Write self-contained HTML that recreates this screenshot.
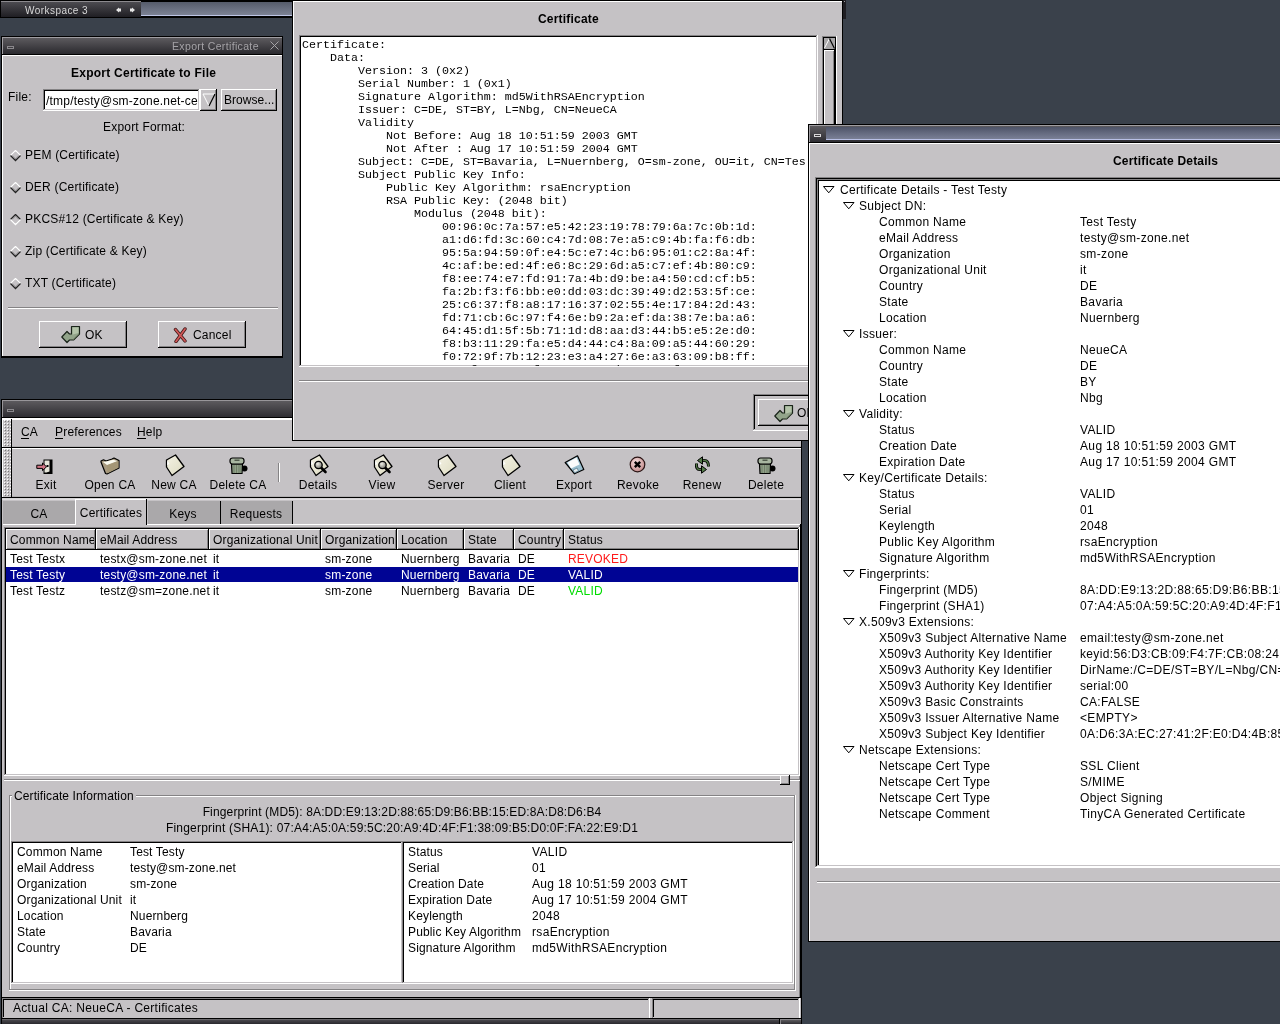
<!DOCTYPE html><html><head><meta charset="utf-8"><style>
html,body{margin:0;padding:0}
body{width:1280px;height:1024px;overflow:hidden;position:relative;background:#3a414b;font-family:'Liberation Sans',sans-serif}
div{position:absolute}
.t{white-space:pre;font-family:'Liberation Sans',sans-serif;font-size:12px;line-height:14px}
</style></head><body><div style="left:0;top:0;width:1280px;height:1024px;overflow:hidden;will-change:transform">
<div style="left:0px;top:0px;width:292px;height:18px;background:#000;"></div>
<div style="left:1px;top:1px;width:140px;height:16px;background:linear-gradient(#4c4b50,#1f1e23);border-top:1px solid #8c8a8e;box-sizing:border-box"></div>
<div style="left:141px;top:2px;width:151px;height:14px;background:linear-gradient(#555b6a,#7c8294);border-bottom:1px solid #bcc4e4;box-sizing:border-box"></div>
<div class="t" style="left:25px;top:5px;font-size:10px;color:#d8d8d8;letter-spacing:0.45px;line-height:12px;font-family:'Liberation Sans';">Workspace 3</div>
<svg style="position:absolute;left:115px;top:7px" width="22" height="6"><path d="M1 3 L4 0.5 V5.5Z M4 1.5h2v3h-2z" fill="#e6e6e6"/><path d="M15 1.5h2v3h-2z M17 0.5 L20 3 L17 5.5Z" fill="#e6e6e6"/></svg>
<div style="left:1px;top:399px;width:801px;height:625px;background:#000;"></div>
<div style="left:2px;top:400px;width:799px;height:17px;background:linear-gradient(#5c5a5e,#2e2d32);border-top:1px solid #98969a;border-left:1px solid #98969a;box-sizing:border-box"></div>
<div style="left:7px;top:409px;width:7px;height:3px;background:transparent;border:1px solid #8a888c;box-sizing:border-box"></div>
<div style="left:2px;top:418px;width:799px;height:601px;background:#fff;"></div>
<div style="left:2px;top:419px;width:799px;height:600px;background:#c5c2c5;"></div>
<div style="left:2px;top:419px;width:10px;height:29px;background:#fff;"></div>
<div style="left:3px;top:420px;width:8px;height:28px;background:#c5c2c5;"></div>
<svg style="position:absolute;left:3px;top:420px" width="8" height="27"><defs><pattern id="hp419" width="3" height="3" patternUnits="userSpaceOnUse"><rect x="1" y="0" width="1" height="1" fill="#fff"/><rect x="2" y="1" width="1" height="1" fill="#777"/></pattern></defs><rect width="8" height="27" fill="url(#hp419)"/></svg>
<div style="left:11px;top:419px;width:1px;height:29px;background:#000;"></div>
<div style="left:2px;top:447px;width:10px;height:1px;background:#000;"></div>
<div style="left:12px;top:419px;width:789px;height:28px;background:#c5c2c5;"></div>
<div style="left:12px;top:419px;width:789px;height:1px;background:#fff;"></div>
<div style="left:12px;top:447px;width:789px;height:1px;background:#000;"></div>
<div style="left:12px;top:446px;width:789px;height:1px;background:#b0aeb0;"></div>
<div class="t" style="left:21px;top:425px;font-size:12px;color:#000;letter-spacing:0.2px;line-height:14px;font-family:'Liberation Sans';">CA</div>
<div style="left:21px;top:438px;width:8px;height:1px;background:#000;"></div>
<div class="t" style="left:55px;top:425px;font-size:12px;color:#000;letter-spacing:0.2px;line-height:14px;font-family:'Liberation Sans';">Preferences</div>
<div style="left:55px;top:438px;width:8px;height:1px;background:#000;"></div>
<div class="t" style="left:137px;top:425px;font-size:12px;color:#000;letter-spacing:0.2px;line-height:14px;font-family:'Liberation Sans';">Help</div>
<div style="left:137px;top:438px;width:9px;height:1px;background:#000;"></div>
<div style="left:2px;top:448px;width:10px;height:50px;background:#fff;"></div>
<div style="left:3px;top:449px;width:8px;height:49px;background:#c5c2c5;"></div>
<svg style="position:absolute;left:3px;top:449px" width="8" height="48"><defs><pattern id="hp448" width="3" height="3" patternUnits="userSpaceOnUse"><rect x="1" y="0" width="1" height="1" fill="#fff"/><rect x="2" y="1" width="1" height="1" fill="#777"/></pattern></defs><rect width="8" height="48" fill="url(#hp448)"/></svg>
<div style="left:11px;top:448px;width:1px;height:50px;background:#000;"></div>
<div style="left:2px;top:497px;width:10px;height:1px;background:#000;"></div>
<div style="left:12px;top:448px;width:789px;height:49px;background:#c5c2c5;"></div>
<div style="left:12px;top:448px;width:789px;height:1px;background:#fff;"></div>
<div style="left:12px;top:497px;width:789px;height:1px;background:#000;"></div>
<div style="left:12px;top:496px;width:789px;height:1px;background:#b0aeb0;"></div>
<div style="left:2px;top:498px;width:799px;height:1px;background:#d4d2d4;"></div>
<div style="left:2px;top:499px;width:799px;height:1px;background:#dedcde;"></div>
<div class="t" style="left:-254px;width:600px;text-align:center;top:478px;font-size:12px;color:#000;letter-spacing:0.25px;line-height:14px;">Exit</div>
<div class="t" style="left:-190px;width:600px;text-align:center;top:478px;font-size:12px;color:#000;letter-spacing:0.25px;line-height:14px;">Open CA</div>
<div class="t" style="left:-126px;width:600px;text-align:center;top:478px;font-size:12px;color:#000;letter-spacing:0.25px;line-height:14px;">New CA</div>
<div class="t" style="left:-62px;width:600px;text-align:center;top:478px;font-size:12px;color:#000;letter-spacing:0.25px;line-height:14px;">Delete CA</div>
<div class="t" style="left:18px;width:600px;text-align:center;top:478px;font-size:12px;color:#000;letter-spacing:0.25px;line-height:14px;">Details</div>
<div class="t" style="left:82px;width:600px;text-align:center;top:478px;font-size:12px;color:#000;letter-spacing:0.25px;line-height:14px;">View</div>
<div class="t" style="left:146px;width:600px;text-align:center;top:478px;font-size:12px;color:#000;letter-spacing:0.25px;line-height:14px;">Server</div>
<div class="t" style="left:210px;width:600px;text-align:center;top:478px;font-size:12px;color:#000;letter-spacing:0.25px;line-height:14px;">Client</div>
<div class="t" style="left:274px;width:600px;text-align:center;top:478px;font-size:12px;color:#000;letter-spacing:0.25px;line-height:14px;">Export</div>
<div class="t" style="left:338px;width:600px;text-align:center;top:478px;font-size:12px;color:#000;letter-spacing:0.25px;line-height:14px;">Revoke</div>
<div class="t" style="left:402px;width:600px;text-align:center;top:478px;font-size:12px;color:#000;letter-spacing:0.25px;line-height:14px;">Renew</div>
<div class="t" style="left:466px;width:600px;text-align:center;top:478px;font-size:12px;color:#000;letter-spacing:0.25px;line-height:14px;">Delete</div>
<div style="left:278px;top:463px;width:1px;height:19px;background:#858385;"></div>
<div style="left:279px;top:463px;width:1px;height:19px;background:#fff;"></div>
<svg style="position:absolute;left:0px;top:0px" width="0" height="0"><defs><linearGradient id="dg" x1="0" y1="0" x2="1" y2="1"><stop offset="0" stop-color="#f4f2e4"/><stop offset="1" stop-color="#dcdac0"/></linearGradient><radialGradient id="mg" cx="0.4" cy="0.35" r="0.7"><stop offset="0" stop-color="#f0f0e8"/><stop offset="1" stop-color="#707068"/></radialGradient><radialGradient id="rg" cx="0.4" cy="0.35" r="0.7"><stop offset="0" stop-color="#f4dede"/><stop offset="1" stop-color="#c08888"/></radialGradient></defs></svg>
<svg style="position:absolute;left:36px;top:459px" width="18" height="16"><rect x="7.5" y="0.5" width="9" height="14.5" fill="#000"/><path d="M8.5 1.5 H13.5 V12.5 L10.5 13.5 H8.5Z" fill="#e6e6da"/><rect x="10.5" y="6" width="2" height="2" fill="#000"/><path d="M0.8 6.2 H6.5 V4 L10.5 7.8 L6.5 11.6 V9.4 H0.8Z" fill="#d27484" stroke="#000" stroke-width="1"/></svg>
<svg style="position:absolute;left:100px;top:457px" width="20" height="18"><path d="M1 4 L3.5 2.8 L6 4 L12 2 L14 1 L19 3.5 L19 11 L7 17 L5.5 16.5 L1 5Z" fill="#a89a80" stroke="#000" stroke-width="1.2" stroke-linejoin="round"/><path d="M3 5 L6 4.5 L13 2.8 L17.5 4 L7 8Z" fill="#fafaf0"/><path d="M7 8.5 L18.5 4 V10.8 L7.5 16.2Z" fill="#a49676"/></svg>
<svg style="position:absolute;left:165px;top:454px" width="21" height="23"><path d="M1.5 6 L10.5 1 L19 12.5 L7 21.5 L1.5 13 Z" fill="url(#dg)" stroke="#000" stroke-width="1.3" stroke-linejoin="round"/><path d="M2.2 6.8 L4.5 9.5 L2.2 11.5Z" fill="#fff"/></svg>
<svg style="position:absolute;left:229px;top:457px" width="20" height="18"><circle cx="15.5" cy="11.5" r="3" fill="#000"/><path d="M2.5 7 H13.5 L13 16.5 H3Z" fill="#90a088" stroke="#000" stroke-width="1.2"/><path d="M5 8 V16 M7.5 8 V16 M10 8 V16 M12 8 V16" stroke="#6c7c64" stroke-width="0.9"/><rect x="1" y="1" width="14" height="6" rx="2.5" fill="#a8b6a0" stroke="#000" stroke-width="1.2"/><rect x="5.5" y="2.5" width="5" height="1.5" fill="#505a4c"/></svg>
<svg style="position:absolute;left:309px;top:454px" width="21" height="23"><path d="M1.5 6 L10.5 1 L19 12.5 L7 21.5 L1.5 13 Z" fill="url(#dg)" stroke="#000" stroke-width="1.3" stroke-linejoin="round"/><path d="M2.2 6.8 L4.5 9.5 L2.2 11.5Z" fill="#fff"/><path d="M12 13.5 L16.5 18" stroke="#000" stroke-width="2.6" stroke-linecap="round"/><circle cx="9.5" cy="11" r="3.7" fill="url(#mg)" stroke="#000" stroke-width="1.3"/></svg>
<svg style="position:absolute;left:373px;top:454px" width="21" height="23"><path d="M1.5 6 L10.5 1 L19 12.5 L7 21.5 L1.5 13 Z" fill="url(#dg)" stroke="#000" stroke-width="1.3" stroke-linejoin="round"/><path d="M2.2 6.8 L4.5 9.5 L2.2 11.5Z" fill="#fff"/><path d="M12 13.5 L16.5 18" stroke="#000" stroke-width="2.6" stroke-linecap="round"/><circle cx="9.5" cy="11" r="3.7" fill="url(#mg)" stroke="#000" stroke-width="1.3"/></svg>
<svg style="position:absolute;left:437px;top:454px" width="21" height="23"><path d="M1.5 6 L10.5 1 L19 12.5 L7 21.5 L1.5 13 Z" fill="url(#dg)" stroke="#000" stroke-width="1.3" stroke-linejoin="round"/><path d="M2.2 6.8 L4.5 9.5 L2.2 11.5Z" fill="#fff"/></svg>
<svg style="position:absolute;left:501px;top:454px" width="21" height="23"><path d="M1.5 6 L10.5 1 L19 12.5 L7 21.5 L1.5 13 Z" fill="url(#dg)" stroke="#000" stroke-width="1.3" stroke-linejoin="round"/><path d="M2.2 6.8 L4.5 9.5 L2.2 11.5Z" fill="#fff"/></svg>
<svg style="position:absolute;left:564px;top:455px" width="21" height="20"><path d="M1.2 7.5 L13.5 0.8 L19.8 14.5 L10.5 18.8 Z" fill="#9cc0d0" stroke="#000" stroke-width="1.2" stroke-linejoin="round"/><path d="M3.5 7.5 L12.5 2.5 L15.5 9.5 L7 13.5Z" fill="#fbfbfb"/><path d="M9 15 L13 13 L14.5 16 L10.5 17.8Z" fill="#e8eef0" stroke="#5a7a8a" stroke-width="0.8"/></svg>
<svg style="position:absolute;left:629px;top:456px" width="17" height="17"><circle cx="8.5" cy="8.5" r="7.3" fill="url(#rg)" stroke="#2a1414" stroke-width="1.2"/><path d="M5.8 5.8 L11.2 11.2 M11.2 5.8 L5.8 11.2" stroke="#000" stroke-width="2.4"/></svg>
<svg style="position:absolute;left:694px;top:456px" width="17" height="19"><path d="M8 4.5 H10.5 Q14.5 4.5 14.5 10.5" fill="none" stroke="#000" stroke-width="3"/><path d="M8 13.5 H5.5 Q2 13.5 2.5 7.5" fill="none" stroke="#000" stroke-width="3"/><path d="M8 4.5 H10.5 Q14.5 4.5 14.5 10.5" fill="none" stroke="#527a46" stroke-width="1.3"/><path d="M8 13.5 H5.5 Q2 13.5 2.5 7.5" fill="none" stroke="#527a46" stroke-width="1.3"/><path d="M3.5 4.5 L8.5 0.8 L8.5 8.2Z" fill="#527a46" stroke="#000" stroke-width="1"/><path d="M12.5 13.5 L7.5 9.8 L7.5 17.2Z" fill="#527a46" stroke="#000" stroke-width="1"/></svg>
<svg style="position:absolute;left:757px;top:457px" width="20" height="18"><circle cx="15.5" cy="11.5" r="3" fill="#000"/><path d="M2.5 7 H13.5 L13 16.5 H3Z" fill="#90a088" stroke="#000" stroke-width="1.2"/><path d="M5 8 V16 M7.5 8 V16 M10 8 V16 M12 8 V16" stroke="#6c7c64" stroke-width="0.9"/><rect x="1" y="1" width="14" height="6" rx="2.5" fill="#a8b6a0" stroke="#000" stroke-width="1.2"/><rect x="5.5" y="2.5" width="5" height="1.5" fill="#505a4c"/></svg>
<div style="left:2px;top:500px;width:799px;height:498px;background:#c5c2c5;"></div>
<div style="left:3px;top:501px;width:72px;height:23px;background:#aaa8aa;"></div>
<div class="t" style="left:-261px;width:600px;text-align:center;top:507px;font-size:12px;color:#000;letter-spacing:0.2px;line-height:14px;">CA</div>
<div style="left:148px;top:501px;width:73px;height:23px;background:#aaa8aa;"></div>
<div style="left:220px;top:501px;width:1px;height:23px;background:#000;"></div>
<div class="t" style="left:-117px;width:600px;text-align:center;top:507px;font-size:12px;color:#000;letter-spacing:0.2px;line-height:14px;">Keys</div>
<div style="left:221px;top:501px;width:72px;height:23px;background:#aaa8aa;"></div>
<div style="left:292px;top:501px;width:1px;height:23px;background:#000;"></div>
<div class="t" style="left:-44px;width:600px;text-align:center;top:507px;font-size:12px;color:#000;letter-spacing:0.2px;line-height:14px;">Requests</div>
<div style="left:3px;top:524px;width:797px;height:1px;background:#fff;"></div>
<div style="left:75px;top:499px;width:72px;height:27px;background:#c5c2c5;"></div>
<div style="left:75px;top:499px;width:1px;height:26px;background:#fff;"></div>
<div style="left:76px;top:499px;width:70px;height:1px;background:#fff;"></div>
<div style="left:146px;top:499px;width:1px;height:26px;background:#000;"></div>
<div class="t" style="left:-189px;width:600px;text-align:center;top:506px;font-size:12px;color:#000;letter-spacing:0.2px;line-height:14px;">Certificates</div>
<div style="left:800px;top:524px;width:1px;height:474px;background:#000;"></div>
<div style="left:799px;top:525px;width:1px;height:472px;background:#858385;"></div>
<div style="left:4px;top:527px;width:796px;height:249px;background:#fff;"></div>
<div style="left:4px;top:527px;width:795px;height:248px;background:#858385;"></div>
<div style="left:5px;top:528px;width:794px;height:247px;background:#c5c2c5;"></div>
<div style="left:5px;top:528px;width:793px;height:246px;background:#000;"></div>
<div style="left:6px;top:529px;width:792px;height:245px;background:#fff;"></div>
<div style="left:6px;top:529px;width:90px;height:21px;background:#000;"></div>
<div style="left:6px;top:529px;width:89px;height:20px;background:#fff;"></div>
<div style="left:7px;top:530px;width:88px;height:19px;background:#858385;"></div>
<div style="left:7px;top:530px;width:87px;height:18px;background:#c5c2c5;"></div>
<div class="t" style="left:10px;top:533px;font-size:12px;color:#000;letter-spacing:0.15px;line-height:14px;font-family:'Liberation Sans';width:84px;overflow:hidden">Common Name</div>
<div style="left:96px;top:529px;width:113px;height:21px;background:#000;"></div>
<div style="left:96px;top:529px;width:112px;height:20px;background:#fff;"></div>
<div style="left:97px;top:530px;width:111px;height:19px;background:#858385;"></div>
<div style="left:97px;top:530px;width:110px;height:18px;background:#c5c2c5;"></div>
<div class="t" style="left:100px;top:533px;font-size:12px;color:#000;letter-spacing:0.15px;line-height:14px;font-family:'Liberation Sans';width:107px;overflow:hidden">eMail Address</div>
<div style="left:209px;top:529px;width:112px;height:21px;background:#000;"></div>
<div style="left:209px;top:529px;width:111px;height:20px;background:#fff;"></div>
<div style="left:210px;top:530px;width:110px;height:19px;background:#858385;"></div>
<div style="left:210px;top:530px;width:109px;height:18px;background:#c5c2c5;"></div>
<div class="t" style="left:213px;top:533px;font-size:12px;color:#000;letter-spacing:0.15px;line-height:14px;font-family:'Liberation Sans';width:106px;overflow:hidden">Organizational Unit</div>
<div style="left:321px;top:529px;width:76px;height:21px;background:#000;"></div>
<div style="left:321px;top:529px;width:75px;height:20px;background:#fff;"></div>
<div style="left:322px;top:530px;width:74px;height:19px;background:#858385;"></div>
<div style="left:322px;top:530px;width:73px;height:18px;background:#c5c2c5;"></div>
<div class="t" style="left:325px;top:533px;font-size:12px;color:#000;letter-spacing:0.15px;line-height:14px;font-family:'Liberation Sans';width:70px;overflow:hidden">Organization</div>
<div style="left:397px;top:529px;width:67px;height:21px;background:#000;"></div>
<div style="left:397px;top:529px;width:66px;height:20px;background:#fff;"></div>
<div style="left:398px;top:530px;width:65px;height:19px;background:#858385;"></div>
<div style="left:398px;top:530px;width:64px;height:18px;background:#c5c2c5;"></div>
<div class="t" style="left:401px;top:533px;font-size:12px;color:#000;letter-spacing:0.15px;line-height:14px;font-family:'Liberation Sans';width:61px;overflow:hidden">Location</div>
<div style="left:464px;top:529px;width:50px;height:21px;background:#000;"></div>
<div style="left:464px;top:529px;width:49px;height:20px;background:#fff;"></div>
<div style="left:465px;top:530px;width:48px;height:19px;background:#858385;"></div>
<div style="left:465px;top:530px;width:47px;height:18px;background:#c5c2c5;"></div>
<div class="t" style="left:468px;top:533px;font-size:12px;color:#000;letter-spacing:0.15px;line-height:14px;font-family:'Liberation Sans';width:44px;overflow:hidden">State</div>
<div style="left:514px;top:529px;width:50px;height:21px;background:#000;"></div>
<div style="left:514px;top:529px;width:49px;height:20px;background:#fff;"></div>
<div style="left:515px;top:530px;width:48px;height:19px;background:#858385;"></div>
<div style="left:515px;top:530px;width:47px;height:18px;background:#c5c2c5;"></div>
<div class="t" style="left:518px;top:533px;font-size:12px;color:#000;letter-spacing:0.15px;line-height:14px;font-family:'Liberation Sans';width:44px;overflow:hidden">Country</div>
<div style="left:564px;top:529px;width:235px;height:21px;background:#000;"></div>
<div style="left:564px;top:529px;width:234px;height:20px;background:#fff;"></div>
<div style="left:565px;top:530px;width:233px;height:19px;background:#858385;"></div>
<div style="left:565px;top:530px;width:232px;height:18px;background:#c5c2c5;"></div>
<div class="t" style="left:568px;top:533px;font-size:12px;color:#000;letter-spacing:0.15px;line-height:14px;font-family:'Liberation Sans';width:229px;overflow:hidden">Status</div>
<div style="left:6px;top:567px;width:792px;height:15px;background:#000494;"></div>
<div class="t" style="left:10px;top:552px;font-size:12px;color:#000;letter-spacing:0.2px;line-height:14px;font-family:'Liberation Sans';">Test Testx</div>
<div class="t" style="left:100px;top:552px;font-size:12px;color:#000;letter-spacing:0.2px;line-height:14px;font-family:'Liberation Sans';">testx@sm-zone.net</div>
<div class="t" style="left:213px;top:552px;font-size:12px;color:#000;letter-spacing:0.2px;line-height:14px;font-family:'Liberation Sans';">it</div>
<div class="t" style="left:325px;top:552px;font-size:12px;color:#000;letter-spacing:0.2px;line-height:14px;font-family:'Liberation Sans';">sm-zone</div>
<div class="t" style="left:401px;top:552px;font-size:12px;color:#000;letter-spacing:0.2px;line-height:14px;font-family:'Liberation Sans';">Nuernberg</div>
<div class="t" style="left:468px;top:552px;font-size:12px;color:#000;letter-spacing:0.2px;line-height:14px;font-family:'Liberation Sans';">Bavaria</div>
<div class="t" style="left:518px;top:552px;font-size:12px;color:#000;letter-spacing:0.2px;line-height:14px;font-family:'Liberation Sans';">DE</div>
<div class="t" style="left:568px;top:552px;font-size:12px;color:#ff1a1a;letter-spacing:0.2px;line-height:14px;font-family:'Liberation Sans';">REVOKED</div>
<div class="t" style="left:10px;top:568px;font-size:12px;color:#fff;letter-spacing:0.2px;line-height:14px;font-family:'Liberation Sans';">Test Testy</div>
<div class="t" style="left:100px;top:568px;font-size:12px;color:#fff;letter-spacing:0.2px;line-height:14px;font-family:'Liberation Sans';">testy@sm-zone.net</div>
<div class="t" style="left:213px;top:568px;font-size:12px;color:#fff;letter-spacing:0.2px;line-height:14px;font-family:'Liberation Sans';">it</div>
<div class="t" style="left:325px;top:568px;font-size:12px;color:#fff;letter-spacing:0.2px;line-height:14px;font-family:'Liberation Sans';">sm-zone</div>
<div class="t" style="left:401px;top:568px;font-size:12px;color:#fff;letter-spacing:0.2px;line-height:14px;font-family:'Liberation Sans';">Nuernberg</div>
<div class="t" style="left:468px;top:568px;font-size:12px;color:#fff;letter-spacing:0.2px;line-height:14px;font-family:'Liberation Sans';">Bavaria</div>
<div class="t" style="left:518px;top:568px;font-size:12px;color:#fff;letter-spacing:0.2px;line-height:14px;font-family:'Liberation Sans';">DE</div>
<div class="t" style="left:568px;top:568px;font-size:12px;color:#fff;letter-spacing:0.2px;line-height:14px;font-family:'Liberation Sans';">VALID</div>
<div class="t" style="left:10px;top:584px;font-size:12px;color:#000;letter-spacing:0.2px;line-height:14px;font-family:'Liberation Sans';">Test Testz</div>
<div class="t" style="left:100px;top:584px;font-size:12px;color:#000;letter-spacing:0.2px;line-height:14px;font-family:'Liberation Sans';">testz@sm=zone.net</div>
<div class="t" style="left:213px;top:584px;font-size:12px;color:#000;letter-spacing:0.2px;line-height:14px;font-family:'Liberation Sans';">it</div>
<div class="t" style="left:325px;top:584px;font-size:12px;color:#000;letter-spacing:0.2px;line-height:14px;font-family:'Liberation Sans';">sm-zone</div>
<div class="t" style="left:401px;top:584px;font-size:12px;color:#000;letter-spacing:0.2px;line-height:14px;font-family:'Liberation Sans';">Nuernberg</div>
<div class="t" style="left:468px;top:584px;font-size:12px;color:#000;letter-spacing:0.2px;line-height:14px;font-family:'Liberation Sans';">Bavaria</div>
<div class="t" style="left:518px;top:584px;font-size:12px;color:#000;letter-spacing:0.2px;line-height:14px;font-family:'Liberation Sans';">DE</div>
<div class="t" style="left:568px;top:584px;font-size:12px;color:#00dd00;letter-spacing:0.2px;line-height:14px;font-family:'Liberation Sans';">VALID</div>
<div style="left:4px;top:779px;width:796px;height:1px;background:#858385;"></div>
<div style="left:4px;top:780px;width:796px;height:1px;background:#fff;"></div>
<div style="left:780px;top:775px;width:10px;height:10px;background:#000;"></div>
<div style="left:780px;top:775px;width:9px;height:9px;background:#fff;"></div>
<div style="left:781px;top:776px;width:8px;height:8px;background:#858385;"></div>
<div style="left:781px;top:776px;width:7px;height:7px;background:#c5c2c5;"></div>
<div style="left:9px;top:795px;width:787px;height:1px;background:#858385;"></div>
<div style="left:10px;top:796px;width:785px;height:1px;background:#fff;"></div>
<div style="left:9px;top:795px;width:1px;height:196px;background:#858385;"></div>
<div style="left:10px;top:796px;width:1px;height:194px;background:#fff;"></div>
<div style="left:794px;top:795px;width:1px;height:195px;background:#858385;"></div>
<div style="left:795px;top:795px;width:1px;height:196px;background:#fff;"></div>
<div style="left:9px;top:989px;width:786px;height:1px;background:#858385;"></div>
<div style="left:9px;top:990px;width:787px;height:1px;background:#fff;"></div>
<div style="left:12px;top:790px;width:124px;height:12px;background:#c5c2c5;"></div>
<div class="t" style="left:14px;top:789px;font-size:12px;color:#000;letter-spacing:0.1px;line-height:14px;font-family:'Liberation Sans';">Certificate Information</div>
<div class="t" style="left:102px;width:600px;text-align:center;top:805px;font-size:12px;color:#000;letter-spacing:0.15px;line-height:14px;">Fingerprint (MD5): 8A:DD:E9:13:2D:88:65:D9:B6:BB:15:ED:8A:D8:D6:B4</div>
<div class="t" style="left:102px;width:600px;text-align:center;top:821px;font-size:12px;color:#000;letter-spacing:0.2px;line-height:14px;">Fingerprint (SHA1): 07:A4:A5:0A:59:5C:20:A9:4D:4F:F1:38:09:B5:D0:0F:FA:22:E9:D1</div>
<div style="left:11px;top:841px;width:392px;height:143px;background:#fff;"></div>
<div style="left:11px;top:841px;width:391px;height:142px;background:#858385;"></div>
<div style="left:12px;top:842px;width:390px;height:141px;background:#c5c2c5;"></div>
<div style="left:12px;top:842px;width:389px;height:140px;background:#000;"></div>
<div style="left:13px;top:843px;width:388px;height:139px;background:#fff;"></div>
<div style="left:402px;top:841px;width:392px;height:143px;background:#fff;"></div>
<div style="left:402px;top:841px;width:391px;height:142px;background:#858385;"></div>
<div style="left:403px;top:842px;width:390px;height:141px;background:#c5c2c5;"></div>
<div style="left:403px;top:842px;width:389px;height:140px;background:#000;"></div>
<div style="left:404px;top:843px;width:388px;height:139px;background:#fff;"></div>
<div class="t" style="left:17px;top:845px;font-size:12px;color:#000;letter-spacing:0.15px;line-height:14px;font-family:'Liberation Sans';">Common Name</div>
<div class="t" style="left:130px;top:845px;font-size:12px;color:#000;letter-spacing:0.15px;line-height:14px;font-family:'Liberation Sans';">Test Testy</div>
<div class="t" style="left:17px;top:861px;font-size:12px;color:#000;letter-spacing:0.15px;line-height:14px;font-family:'Liberation Sans';">eMail Address</div>
<div class="t" style="left:130px;top:861px;font-size:12px;color:#000;letter-spacing:0.15px;line-height:14px;font-family:'Liberation Sans';">testy@sm-zone.net</div>
<div class="t" style="left:17px;top:877px;font-size:12px;color:#000;letter-spacing:0.15px;line-height:14px;font-family:'Liberation Sans';">Organization</div>
<div class="t" style="left:130px;top:877px;font-size:12px;color:#000;letter-spacing:0.15px;line-height:14px;font-family:'Liberation Sans';">sm-zone</div>
<div class="t" style="left:17px;top:893px;font-size:12px;color:#000;letter-spacing:0.15px;line-height:14px;font-family:'Liberation Sans';">Organizational Unit</div>
<div class="t" style="left:130px;top:893px;font-size:12px;color:#000;letter-spacing:0.15px;line-height:14px;font-family:'Liberation Sans';">it</div>
<div class="t" style="left:17px;top:909px;font-size:12px;color:#000;letter-spacing:0.15px;line-height:14px;font-family:'Liberation Sans';">Location</div>
<div class="t" style="left:130px;top:909px;font-size:12px;color:#000;letter-spacing:0.15px;line-height:14px;font-family:'Liberation Sans';">Nuernberg</div>
<div class="t" style="left:17px;top:925px;font-size:12px;color:#000;letter-spacing:0.15px;line-height:14px;font-family:'Liberation Sans';">State</div>
<div class="t" style="left:130px;top:925px;font-size:12px;color:#000;letter-spacing:0.15px;line-height:14px;font-family:'Liberation Sans';">Bavaria</div>
<div class="t" style="left:17px;top:941px;font-size:12px;color:#000;letter-spacing:0.15px;line-height:14px;font-family:'Liberation Sans';">Country</div>
<div class="t" style="left:130px;top:941px;font-size:12px;color:#000;letter-spacing:0.15px;line-height:14px;font-family:'Liberation Sans';">DE</div>
<div class="t" style="left:408px;top:845px;font-size:12px;color:#000;letter-spacing:0.15px;line-height:14px;font-family:'Liberation Sans';">Status</div>
<div class="t" style="left:532px;top:845px;font-size:12px;color:#000;letter-spacing:0.33px;line-height:14px;font-family:'Liberation Sans';">VALID</div>
<div class="t" style="left:408px;top:861px;font-size:12px;color:#000;letter-spacing:0.15px;line-height:14px;font-family:'Liberation Sans';">Serial</div>
<div class="t" style="left:532px;top:861px;font-size:12px;color:#000;letter-spacing:0.33px;line-height:14px;font-family:'Liberation Sans';">01</div>
<div class="t" style="left:408px;top:877px;font-size:12px;color:#000;letter-spacing:0.15px;line-height:14px;font-family:'Liberation Sans';">Creation Date</div>
<div class="t" style="left:532px;top:877px;font-size:12px;color:#000;letter-spacing:0.33px;line-height:14px;font-family:'Liberation Sans';">Aug 18 10:51:59 2003 GMT</div>
<div class="t" style="left:408px;top:893px;font-size:12px;color:#000;letter-spacing:0.15px;line-height:14px;font-family:'Liberation Sans';">Expiration Date</div>
<div class="t" style="left:532px;top:893px;font-size:12px;color:#000;letter-spacing:0.33px;line-height:14px;font-family:'Liberation Sans';">Aug 17 10:51:59 2004 GMT</div>
<div class="t" style="left:408px;top:909px;font-size:12px;color:#000;letter-spacing:0.15px;line-height:14px;font-family:'Liberation Sans';">Keylength</div>
<div class="t" style="left:532px;top:909px;font-size:12px;color:#000;letter-spacing:0.33px;line-height:14px;font-family:'Liberation Sans';">2048</div>
<div class="t" style="left:408px;top:925px;font-size:12px;color:#000;letter-spacing:0.15px;line-height:14px;font-family:'Liberation Sans';">Public Key Algorithm</div>
<div class="t" style="left:532px;top:925px;font-size:12px;color:#000;letter-spacing:0.33px;line-height:14px;font-family:'Liberation Sans';">rsaEncryption</div>
<div class="t" style="left:408px;top:941px;font-size:12px;color:#000;letter-spacing:0.15px;line-height:14px;font-family:'Liberation Sans';">Signature Algorithm</div>
<div class="t" style="left:532px;top:941px;font-size:12px;color:#000;letter-spacing:0.33px;line-height:14px;font-family:'Liberation Sans';">md5WithRSAEncryption</div>
<div style="left:1px;top:997px;width:800px;height:1px;background:#000;"></div>
<div style="left:2px;top:998px;width:648px;height:21px;background:#fff;"></div>
<div style="left:2px;top:998px;width:647px;height:20px;background:#858385;"></div>
<div style="left:3px;top:999px;width:646px;height:19px;background:#c5c2c5;"></div>
<div style="left:3px;top:999px;width:645px;height:18px;background:#000;"></div>
<div style="left:4px;top:1000px;width:644px;height:17px;background:#c5c2c5;"></div>
<div style="left:652px;top:998px;width:148px;height:21px;background:#fff;"></div>
<div style="left:652px;top:998px;width:147px;height:20px;background:#858385;"></div>
<div style="left:653px;top:999px;width:146px;height:19px;background:#c5c2c5;"></div>
<div style="left:653px;top:999px;width:145px;height:18px;background:#000;"></div>
<div style="left:654px;top:1000px;width:144px;height:17px;background:#c5c2c5;"></div>
<div class="t" style="left:13px;top:1001px;font-size:12px;color:#000;letter-spacing:0.3px;line-height:14px;font-family:'Liberation Sans';">Actual CA: NeueCA - Certificates</div>
<div style="left:1px;top:1018px;width:801px;height:6px;background:#000;"></div>
<div style="left:2px;top:1019px;width:777px;height:5px;background:linear-gradient(#48474c,#2a292e);border-top:1px solid #6a686c;box-sizing:border-box"></div>
<div style="left:780px;top:1019px;width:21px;height:5px;background:linear-gradient(#5c5a5e,#2e2d32);border-top:1px solid #8a888c;border-left:1px solid #8a888c;box-sizing:border-box"></div>
<div style="left:1px;top:36px;width:282px;height:322px;background:#000;"></div>
<div style="left:2px;top:37px;width:280px;height:17px;background:linear-gradient(#5c5a5e,#2a292e);border-top:1px solid #a09ea2;border-left:1px solid #a09ea2;box-sizing:border-box"></div>
<div style="left:7px;top:46px;width:7px;height:3px;background:transparent;border:1px solid #8a888c;box-sizing:border-box"></div>
<div class="t" style="left:172px;top:40px;font-size:10.5px;color:#a4a2a6;letter-spacing:0.35px;line-height:12px;font-family:'Liberation Sans';">Export Certificate</div>
<svg style="position:absolute;left:270px;top:41px" width="9" height="9"><path d="M0.5 0.5L8.5 8.5M8.5 0.5L0.5 8.5" stroke="#a4a2a6" stroke-width="1"/></svg>
<div style="left:2px;top:55px;width:280px;height:301px;background:#fff;"></div>
<div style="left:3px;top:56px;width:279px;height:300px;background:#c5c2c5;"></div>
<div class="t" style="left:71px;top:66px;font-size:12px;font-weight:bold;color:#000;letter-spacing:0.25px;line-height:14px;font-family:'Liberation Sans';">Export Certificate to File</div>
<div class="t" style="left:8px;top:90px;font-size:12px;color:#000;letter-spacing:0.2px;line-height:14px;font-family:'Liberation Sans';">File:</div>
<div style="left:43px;top:89px;width:157px;height:22px;background:#fff;"></div>
<div style="left:43px;top:89px;width:156px;height:21px;background:#858385;"></div>
<div style="left:44px;top:90px;width:155px;height:20px;background:#c5c2c5;"></div>
<div style="left:44px;top:90px;width:154px;height:19px;background:#000;"></div>
<div style="left:45px;top:91px;width:153px;height:18px;background:#fff;"></div>
<div class="t" style="left:46px;top:94px;font-size:12px;color:#000;letter-spacing:0.2px;line-height:14px;font-family:'Liberation Sans';width:152px;overflow:hidden">/tmp/testy@sm-zone.net-ce</div>
<div style="left:200px;top:89px;width:17px;height:22px;background:#000;"></div>
<div style="left:200px;top:89px;width:16px;height:21px;background:#fff;"></div>
<div style="left:201px;top:90px;width:15px;height:20px;background:#858385;"></div>
<div style="left:201px;top:90px;width:14px;height:19px;background:#c5c2c5;"></div>
<svg style="position:absolute;left:202px;top:93px" width="14" height="14"><path d="M1 1 L13 1 L7 13 Z" fill="none" stroke="#fff" stroke-width="1"/><path d="M13 1 L7 13" stroke="#000" stroke-width="1.3"/></svg>
<div style="left:221px;top:89px;width:56px;height:22px;background:#000;"></div>
<div style="left:221px;top:89px;width:55px;height:21px;background:#fff;"></div>
<div style="left:222px;top:90px;width:54px;height:20px;background:#858385;"></div>
<div style="left:222px;top:90px;width:53px;height:19px;background:#c5c2c5;"></div>
<div class="t" style="left:224px;top:93px;font-size:12px;color:#000;letter-spacing:0.05px;line-height:14px;font-family:'Liberation Sans';">Browse...</div>
<div class="t" style="left:103px;top:120px;font-size:12px;color:#000;letter-spacing:0.2px;line-height:14px;font-family:'Liberation Sans';">Export Format:</div>
<svg style="position:absolute;left:10px;top:150px" width="12" height="12"><path d="M0.5 5.5 L5.5 0.5 L10.5 5.5" fill="none" stroke="#fff" stroke-width="1.3"/><path d="M0.5 5.5 L5.5 10.5 L10.5 5.5" fill="none" stroke="#222" stroke-width="1.3"/><path d="M2 5.5 L5.5 2 L9 5.5" fill="none" stroke="#c5c2c5" stroke-width="1"/><path d="M2 5.5 L5.5 9 L9 5.5" fill="none" stroke="#8a888a" stroke-width="1"/></svg>
<div class="t" style="left:25px;top:148px;font-size:12px;color:#000;letter-spacing:0.2px;line-height:14px;font-family:'Liberation Sans';">PEM (Certificate)</div>
<svg style="position:absolute;left:10px;top:182px" width="12" height="12"><path d="M0.5 5.5 L5.5 0.5 L10.5 5.5" fill="none" stroke="#fff" stroke-width="1.3"/><path d="M0.5 5.5 L5.5 10.5 L10.5 5.5" fill="none" stroke="#222" stroke-width="1.3"/><path d="M2 5.5 L5.5 2 L9 5.5" fill="none" stroke="#c5c2c5" stroke-width="1"/><path d="M2 5.5 L5.5 9 L9 5.5" fill="none" stroke="#8a888a" stroke-width="1"/></svg>
<div class="t" style="left:25px;top:180px;font-size:12px;color:#000;letter-spacing:0.2px;line-height:14px;font-family:'Liberation Sans';">DER (Certificate)</div>
<svg style="position:absolute;left:10px;top:214px" width="12" height="12"><path d="M0.5 5.5 L5.5 0.5 L10.5 5.5" fill="none" stroke="#222" stroke-width="1.3"/><path d="M0.5 5.5 L5.5 10.5 L10.5 5.5" fill="none" stroke="#fff" stroke-width="1.3"/><path d="M2 5.5 L5.5 2 L9 5.5" fill="none" stroke="#8a888a" stroke-width="1"/><path d="M2 5.5 L5.5 9 L9 5.5" fill="none" stroke="#c5c2c5" stroke-width="1"/></svg>
<div class="t" style="left:25px;top:212px;font-size:12px;color:#000;letter-spacing:0.2px;line-height:14px;font-family:'Liberation Sans';">PKCS#12 (Certificate &amp; Key)</div>
<svg style="position:absolute;left:10px;top:246px" width="12" height="12"><path d="M0.5 5.5 L5.5 0.5 L10.5 5.5" fill="none" stroke="#fff" stroke-width="1.3"/><path d="M0.5 5.5 L5.5 10.5 L10.5 5.5" fill="none" stroke="#222" stroke-width="1.3"/><path d="M2 5.5 L5.5 2 L9 5.5" fill="none" stroke="#c5c2c5" stroke-width="1"/><path d="M2 5.5 L5.5 9 L9 5.5" fill="none" stroke="#8a888a" stroke-width="1"/></svg>
<div class="t" style="left:25px;top:244px;font-size:12px;color:#000;letter-spacing:0.2px;line-height:14px;font-family:'Liberation Sans';">Zip (Certificate &amp; Key)</div>
<svg style="position:absolute;left:10px;top:278px" width="12" height="12"><path d="M0.5 5.5 L5.5 0.5 L10.5 5.5" fill="none" stroke="#fff" stroke-width="1.3"/><path d="M0.5 5.5 L5.5 10.5 L10.5 5.5" fill="none" stroke="#222" stroke-width="1.3"/><path d="M2 5.5 L5.5 2 L9 5.5" fill="none" stroke="#c5c2c5" stroke-width="1"/><path d="M2 5.5 L5.5 9 L9 5.5" fill="none" stroke="#8a888a" stroke-width="1"/></svg>
<div class="t" style="left:25px;top:276px;font-size:12px;color:#000;letter-spacing:0.2px;line-height:14px;font-family:'Liberation Sans';">TXT (Certificate)</div>
<div style="left:8px;top:307px;width:270px;height:1px;background:#858385;"></div>
<div style="left:8px;top:308px;width:270px;height:1px;background:#fff;"></div>
<div style="left:39px;top:321px;width:88px;height:27px;background:#000;"></div>
<div style="left:39px;top:321px;width:87px;height:26px;background:#fff;"></div>
<div style="left:40px;top:322px;width:86px;height:25px;background:#858385;"></div>
<div style="left:40px;top:322px;width:85px;height:24px;background:#c5c2c5;"></div>
<div class="t" style="left:85px;top:328px;font-size:12px;color:#000;letter-spacing:0.2px;line-height:14px;font-family:'Liberation Sans';">OK</div>
<div style="left:158px;top:321px;width:88px;height:27px;background:#000;"></div>
<div style="left:158px;top:321px;width:87px;height:26px;background:#fff;"></div>
<div style="left:159px;top:322px;width:86px;height:25px;background:#858385;"></div>
<div style="left:159px;top:322px;width:85px;height:24px;background:#c5c2c5;"></div>
<div class="t" style="left:193px;top:328px;font-size:12px;color:#000;letter-spacing:0.2px;line-height:14px;font-family:'Liberation Sans';">Cancel</div>
<svg style="position:absolute;left:61px;top:325px" width="20" height="19"><path d="M10.5 1.5 H18.5 V9 L12.5 15 H8.5 L6 17.5 L0.8 12 L6 6.5 L8.5 9 H10.5 Z" fill="#92a48a" stroke="#1a241a" stroke-width="1.2" stroke-linejoin="round"/><path d="M11.5 2.5 H17.5 V8 L12 9.5 H11.5Z" fill="#b4c4aa"/><path d="M12 15 L18 9" stroke="#5a6a52" stroke-width="1"/></svg>
<svg style="position:absolute;left:173px;top:327px" width="15" height="16"><path d="M2.5 2.5 L12 14 M12 2 L3 14.5" stroke="#401818" stroke-width="3.4" stroke-linecap="round"/><path d="M2.5 2.5 L12 14 M12 2 L3 14.5" stroke="#d05858" stroke-width="1.8" stroke-linecap="round"/></svg>
<div style="left:292px;top:0px;width:551px;height:441px;background:#000;"></div>
<div style="left:293px;top:1px;width:549px;height:439px;background:#fff;"></div>
<div style="left:294px;top:2px;width:548px;height:438px;background:#c5c2c5;"></div>
<div class="t" style="left:538px;top:12px;font-size:12px;font-weight:bold;color:#000;letter-spacing:0.2px;line-height:14px;font-family:'Liberation Sans';">Certificate</div>
<div style="left:843px;top:0px;width:3px;height:19px;background:#1e1d22;"></div>
<div style="left:844px;top:1px;width:1px;height:1px;background:#9a989c;"></div>
<div style="left:299px;top:35px;width:519px;height:332px;background:#fff;"></div>
<div style="left:299px;top:35px;width:518px;height:331px;background:#858385;"></div>
<div style="left:300px;top:36px;width:517px;height:330px;background:#c5c2c5;"></div>
<div style="left:300px;top:36px;width:516px;height:329px;background:#000;"></div>
<div style="left:301px;top:37px;width:515px;height:328px;background:#fff;"></div>
<div style="left:301px;top:37px;width:505px;height:329px;overflow:hidden">
<div class="t" style="left:1px;top:2px;font-family:'Liberation Mono',monospace;font-size:11.667px;line-height:13px">Certificate:
    Data:
        Version: 3 (0x2)
        Serial Number: 1 (0x1)
        Signature Algorithm: md5WithRSAEncryption
        Issuer: C=DE, ST=BY, L=Nbg, CN=NeueCA
        Validity
            Not Before: Aug 18 10:51:59 2003 GMT
            Not After : Aug 17 10:51:59 2004 GMT
        Subject: C=DE, ST=Bavaria, L=Nuernberg, O=sm-zone, OU=it, CN=Tes
        Subject Public Key Info:
            Public Key Algorithm: rsaEncryption
            RSA Public Key: (2048 bit)
                Modulus (2048 bit):
                    00:96:0c:7a:57:e5:42:23:19:78:79:6a:7c:0b:1d:
                    a1:d6:fd:3c:60:c4:7d:08:7e:a5:c9:4b:fa:f6:db:
                    95:5a:94:59:0f:e4:5c:e7:4c:b6:95:01:c2:8a:4f:
                    4c:af:be:ed:4f:e6:8c:29:6d:a5:c7:ef:4b:80:c9:
                    f8:ee:74:e7:fd:91:7a:4b:d9:be:a4:50:cd:cf:b5:
                    fa:2b:f3:f6:bb:e0:dd:03:dc:39:49:d2:53:5f:ce:
                    25:c6:37:f8:a8:17:16:37:02:55:4e:17:84:2d:43:
                    fd:71:cb:6c:97:f4:6e:b9:2a:ef:da:38:7e:ba:a6:
                    64:45:d1:5f:5b:71:1d:d8:aa:d3:44:b5:e5:2e:d0:
                    f8:b3:11:29:fa:e5:d4:44:c4:8a:09:a5:44:60:29:
                    f0:72:9f:7b:12:23:e3:a4:27:6e:a3:63:09:b8:ff:
                    4e:af:11:16:0f:09:5a:73:0b:1c:17:f5:c7:97:18:</div>
</div>
<div style="left:822px;top:36px;width:15px;height:331px;background:#fff;"></div>
<div style="left:822px;top:36px;width:14px;height:330px;background:#858385;"></div>
<div style="left:823px;top:37px;width:13px;height:329px;background:#000;"></div>
<div style="left:824px;top:38px;width:11px;height:327px;background:#c5c2c5;"></div>
<svg style="position:absolute;left:824px;top:38px" width="11" height="11"><rect width="11" height="11" fill="#a9a7a9"/><path d="M0.5 10 L5.5 0.5" stroke="#fff" stroke-width="1"/><path d="M5.5 0.5 L10.5 10.5" stroke="#000" stroke-width="1.2"/></svg>
<div style="left:824px;top:49px;width:11px;height:1px;background:#000;"></div>
<div style="left:824px;top:50px;width:11px;height:315px;background:#000;"></div>
<div style="left:824px;top:50px;width:10px;height:314px;background:#fff;"></div>
<div style="left:825px;top:51px;width:9px;height:313px;background:#858385;"></div>
<div style="left:825px;top:51px;width:8px;height:312px;background:#c5c2c5;"></div>
<div style="left:299px;top:380px;width:509px;height:1px;background:#858385;"></div>
<div style="left:299px;top:381px;width:509px;height:1px;background:#fff;"></div>
<div style="left:753px;top:394px;width:90px;height:37px;background:#fff;"></div>
<div style="left:753px;top:394px;width:89px;height:36px;background:#858385;"></div>
<div style="left:754px;top:395px;width:88px;height:35px;background:#c5c2c5;"></div>
<div style="left:754px;top:395px;width:87px;height:34px;background:#000;"></div>
<div style="left:755px;top:396px;width:86px;height:33px;background:#c5c2c5;"></div>
<div style="left:758px;top:399px;width:80px;height:27px;background:#000;"></div>
<div style="left:758px;top:399px;width:79px;height:26px;background:#fff;"></div>
<div style="left:759px;top:400px;width:78px;height:25px;background:#858385;"></div>
<div style="left:759px;top:400px;width:77px;height:24px;background:#c5c2c5;"></div>
<div class="t" style="left:797px;top:406px;font-size:12px;color:#000;letter-spacing:0.2px;line-height:14px;font-family:'Liberation Sans';">OK</div>
<svg style="position:absolute;left:774px;top:404px" width="20" height="19"><path d="M10.5 1.5 H18.5 V9 L12.5 15 H8.5 L6 17.5 L0.8 12 L6 6.5 L8.5 9 H10.5 Z" fill="#92a48a" stroke="#1a241a" stroke-width="1.2" stroke-linejoin="round"/><path d="M11.5 2.5 H17.5 V8 L12 9.5 H11.5Z" fill="#b4c4aa"/><path d="M12 15 L18 9" stroke="#5a6a52" stroke-width="1"/></svg>
<div style="left:808px;top:124px;width:472px;height:818px;background:#000;"></div>
<div style="left:809px;top:125px;width:471px;height:17px;background:linear-gradient(#5c5a5e,#2e2d32);border-top:1px solid #a09ea2;border-left:1px solid #a09ea2;box-sizing:border-box"></div>
<div style="left:814px;top:134px;width:7px;height:3px;background:transparent;border:1px solid #d8d6d8;box-sizing:border-box;background:#3a393c"></div>
<div style="left:826px;top:127px;width:454px;height:13px;background:linear-gradient(#4e5468,#7a8096);border-bottom:1px solid #b8c0e6;box-sizing:border-box"></div>
<div style="left:809px;top:143px;width:471px;height:798px;background:#fff;"></div>
<div style="left:810px;top:144px;width:470px;height:797px;background:#c5c2c5;"></div>
<div class="t" style="left:1113px;top:154px;font-size:12px;font-weight:bold;color:#000;letter-spacing:0.2px;line-height:14px;font-family:'Liberation Sans';">Certificate Details</div>
<div style="left:815px;top:177px;width:465px;height:691px;background:#fff;"></div>
<div style="left:815px;top:177px;width:465px;height:690px;background:#858385;"></div>
<div style="left:816px;top:178px;width:464px;height:689px;background:#c5c2c5;"></div>
<div style="left:816px;top:178px;width:464px;height:688px;background:#000;"></div>
<div style="left:817px;top:179px;width:463px;height:687px;background:#fff;"></div>
<div style="left:817px;top:179px;width:463px;height:1px;background:#858385;"></div>
<div style="left:817px;top:179px;width:1px;height:686px;background:#858385;"></div>
<div style="left:818px;top:180px;width:462px;height:1px;background:#000;"></div>
<div style="left:818px;top:180px;width:1px;height:685px;background:#000;"></div>
<div style="left:819px;top:181px;width:461px;height:684px;background:#fff;"></div>
<div style="left:817px;top:865px;width:463px;height:1px;background:#c5c2c5;"></div>
<div style="left:817px;top:866px;width:463px;height:1px;background:#fff;"></div>
<div style="left:817px;top:881px;width:463px;height:1px;background:#858385;"></div>
<div style="left:817px;top:882px;width:463px;height:1px;background:#fff;"></div>
<svg style="position:absolute;left:823px;top:186px" width="12" height="8"><path d="M0.5 0.5 H11 L5.75 6.8 Z" fill="#fff" stroke="#000" stroke-width="1"/></svg>
<div class="t" style="left:840px;top:183px;font-size:12px;color:#000;letter-spacing:0.3px;line-height:14px;font-family:'Liberation Sans';">Certificate Details - Test Testy</div>
<svg style="position:absolute;left:843px;top:202px" width="12" height="8"><path d="M0.5 0.5 H11 L5.75 6.8 Z" fill="#fff" stroke="#000" stroke-width="1"/></svg>
<div class="t" style="left:859px;top:199px;font-size:12px;color:#000;letter-spacing:0.3px;line-height:14px;font-family:'Liberation Sans';">Subject DN:</div>
<div class="t" style="left:879px;top:215px;font-size:12px;color:#000;letter-spacing:0.3px;line-height:14px;font-family:'Liberation Sans';">Common Name</div>
<div class="t" style="left:1080px;top:215px;font-size:12px;color:#000;letter-spacing:0.35px;line-height:14px;font-family:'Liberation Sans';">Test Testy</div>
<div class="t" style="left:879px;top:231px;font-size:12px;color:#000;letter-spacing:0.3px;line-height:14px;font-family:'Liberation Sans';">eMail Address</div>
<div class="t" style="left:1080px;top:231px;font-size:12px;color:#000;letter-spacing:0.35px;line-height:14px;font-family:'Liberation Sans';">testy@sm-zone.net</div>
<div class="t" style="left:879px;top:247px;font-size:12px;color:#000;letter-spacing:0.3px;line-height:14px;font-family:'Liberation Sans';">Organization</div>
<div class="t" style="left:1080px;top:247px;font-size:12px;color:#000;letter-spacing:0.35px;line-height:14px;font-family:'Liberation Sans';">sm-zone</div>
<div class="t" style="left:879px;top:263px;font-size:12px;color:#000;letter-spacing:0.3px;line-height:14px;font-family:'Liberation Sans';">Organizational Unit</div>
<div class="t" style="left:1080px;top:263px;font-size:12px;color:#000;letter-spacing:0.35px;line-height:14px;font-family:'Liberation Sans';">it</div>
<div class="t" style="left:879px;top:279px;font-size:12px;color:#000;letter-spacing:0.3px;line-height:14px;font-family:'Liberation Sans';">Country</div>
<div class="t" style="left:1080px;top:279px;font-size:12px;color:#000;letter-spacing:0.35px;line-height:14px;font-family:'Liberation Sans';">DE</div>
<div class="t" style="left:879px;top:295px;font-size:12px;color:#000;letter-spacing:0.3px;line-height:14px;font-family:'Liberation Sans';">State</div>
<div class="t" style="left:1080px;top:295px;font-size:12px;color:#000;letter-spacing:0.35px;line-height:14px;font-family:'Liberation Sans';">Bavaria</div>
<div class="t" style="left:879px;top:311px;font-size:12px;color:#000;letter-spacing:0.3px;line-height:14px;font-family:'Liberation Sans';">Location</div>
<div class="t" style="left:1080px;top:311px;font-size:12px;color:#000;letter-spacing:0.35px;line-height:14px;font-family:'Liberation Sans';">Nuernberg</div>
<svg style="position:absolute;left:843px;top:330px" width="12" height="8"><path d="M0.5 0.5 H11 L5.75 6.8 Z" fill="#fff" stroke="#000" stroke-width="1"/></svg>
<div class="t" style="left:859px;top:327px;font-size:12px;color:#000;letter-spacing:0.3px;line-height:14px;font-family:'Liberation Sans';">Issuer:</div>
<div class="t" style="left:879px;top:343px;font-size:12px;color:#000;letter-spacing:0.3px;line-height:14px;font-family:'Liberation Sans';">Common Name</div>
<div class="t" style="left:1080px;top:343px;font-size:12px;color:#000;letter-spacing:0.35px;line-height:14px;font-family:'Liberation Sans';">NeueCA</div>
<div class="t" style="left:879px;top:359px;font-size:12px;color:#000;letter-spacing:0.3px;line-height:14px;font-family:'Liberation Sans';">Country</div>
<div class="t" style="left:1080px;top:359px;font-size:12px;color:#000;letter-spacing:0.35px;line-height:14px;font-family:'Liberation Sans';">DE</div>
<div class="t" style="left:879px;top:375px;font-size:12px;color:#000;letter-spacing:0.3px;line-height:14px;font-family:'Liberation Sans';">State</div>
<div class="t" style="left:1080px;top:375px;font-size:12px;color:#000;letter-spacing:0.35px;line-height:14px;font-family:'Liberation Sans';">BY</div>
<div class="t" style="left:879px;top:391px;font-size:12px;color:#000;letter-spacing:0.3px;line-height:14px;font-family:'Liberation Sans';">Location</div>
<div class="t" style="left:1080px;top:391px;font-size:12px;color:#000;letter-spacing:0.35px;line-height:14px;font-family:'Liberation Sans';">Nbg</div>
<svg style="position:absolute;left:843px;top:410px" width="12" height="8"><path d="M0.5 0.5 H11 L5.75 6.8 Z" fill="#fff" stroke="#000" stroke-width="1"/></svg>
<div class="t" style="left:859px;top:407px;font-size:12px;color:#000;letter-spacing:0.3px;line-height:14px;font-family:'Liberation Sans';">Validity:</div>
<div class="t" style="left:879px;top:423px;font-size:12px;color:#000;letter-spacing:0.3px;line-height:14px;font-family:'Liberation Sans';">Status</div>
<div class="t" style="left:1080px;top:423px;font-size:12px;color:#000;letter-spacing:0.35px;line-height:14px;font-family:'Liberation Sans';">VALID</div>
<div class="t" style="left:879px;top:439px;font-size:12px;color:#000;letter-spacing:0.3px;line-height:14px;font-family:'Liberation Sans';">Creation Date</div>
<div class="t" style="left:1080px;top:439px;font-size:12px;color:#000;letter-spacing:0.35px;line-height:14px;font-family:'Liberation Sans';">Aug 18 10:51:59 2003 GMT</div>
<div class="t" style="left:879px;top:455px;font-size:12px;color:#000;letter-spacing:0.3px;line-height:14px;font-family:'Liberation Sans';">Expiration Date</div>
<div class="t" style="left:1080px;top:455px;font-size:12px;color:#000;letter-spacing:0.35px;line-height:14px;font-family:'Liberation Sans';">Aug 17 10:51:59 2004 GMT</div>
<svg style="position:absolute;left:843px;top:474px" width="12" height="8"><path d="M0.5 0.5 H11 L5.75 6.8 Z" fill="#fff" stroke="#000" stroke-width="1"/></svg>
<div class="t" style="left:859px;top:471px;font-size:12px;color:#000;letter-spacing:0.3px;line-height:14px;font-family:'Liberation Sans';">Key/Certificate Details:</div>
<div class="t" style="left:879px;top:487px;font-size:12px;color:#000;letter-spacing:0.3px;line-height:14px;font-family:'Liberation Sans';">Status</div>
<div class="t" style="left:1080px;top:487px;font-size:12px;color:#000;letter-spacing:0.35px;line-height:14px;font-family:'Liberation Sans';">VALID</div>
<div class="t" style="left:879px;top:503px;font-size:12px;color:#000;letter-spacing:0.3px;line-height:14px;font-family:'Liberation Sans';">Serial</div>
<div class="t" style="left:1080px;top:503px;font-size:12px;color:#000;letter-spacing:0.35px;line-height:14px;font-family:'Liberation Sans';">01</div>
<div class="t" style="left:879px;top:519px;font-size:12px;color:#000;letter-spacing:0.3px;line-height:14px;font-family:'Liberation Sans';">Keylength</div>
<div class="t" style="left:1080px;top:519px;font-size:12px;color:#000;letter-spacing:0.35px;line-height:14px;font-family:'Liberation Sans';">2048</div>
<div class="t" style="left:879px;top:535px;font-size:12px;color:#000;letter-spacing:0.3px;line-height:14px;font-family:'Liberation Sans';">Public Key Algorithm</div>
<div class="t" style="left:1080px;top:535px;font-size:12px;color:#000;letter-spacing:0.35px;line-height:14px;font-family:'Liberation Sans';">rsaEncryption</div>
<div class="t" style="left:879px;top:551px;font-size:12px;color:#000;letter-spacing:0.3px;line-height:14px;font-family:'Liberation Sans';">Signature Algorithm</div>
<div class="t" style="left:1080px;top:551px;font-size:12px;color:#000;letter-spacing:0.35px;line-height:14px;font-family:'Liberation Sans';">md5WithRSAEncryption</div>
<svg style="position:absolute;left:843px;top:570px" width="12" height="8"><path d="M0.5 0.5 H11 L5.75 6.8 Z" fill="#fff" stroke="#000" stroke-width="1"/></svg>
<div class="t" style="left:859px;top:567px;font-size:12px;color:#000;letter-spacing:0.3px;line-height:14px;font-family:'Liberation Sans';">Fingerprints:</div>
<div class="t" style="left:879px;top:583px;font-size:12px;color:#000;letter-spacing:0.3px;line-height:14px;font-family:'Liberation Sans';">Fingerprint (MD5)</div>
<div class="t" style="left:1080px;top:583px;font-size:12px;color:#000;letter-spacing:0.35px;line-height:14px;font-family:'Liberation Sans';">8A:DD:E9:13:2D:88:65:D9:B6:BB:15:ED:8A:D8:D6:B4</div>
<div class="t" style="left:879px;top:599px;font-size:12px;color:#000;letter-spacing:0.3px;line-height:14px;font-family:'Liberation Sans';">Fingerprint (SHA1)</div>
<div class="t" style="left:1080px;top:599px;font-size:12px;color:#000;letter-spacing:0.35px;line-height:14px;font-family:'Liberation Sans';">07:A4:A5:0A:59:5C:20:A9:4D:4F:F1:38:09:B5:D0:0F:FA:22:E9:D1</div>
<svg style="position:absolute;left:843px;top:618px" width="12" height="8"><path d="M0.5 0.5 H11 L5.75 6.8 Z" fill="#fff" stroke="#000" stroke-width="1"/></svg>
<div class="t" style="left:859px;top:615px;font-size:12px;color:#000;letter-spacing:0.3px;line-height:14px;font-family:'Liberation Sans';">X.509v3 Extensions:</div>
<div class="t" style="left:879px;top:631px;font-size:12px;color:#000;letter-spacing:0.3px;line-height:14px;font-family:'Liberation Sans';">X509v3 Subject Alternative Name</div>
<div class="t" style="left:1080px;top:631px;font-size:12px;color:#000;letter-spacing:0.35px;line-height:14px;font-family:'Liberation Sans';">email:testy@sm-zone.net</div>
<div class="t" style="left:879px;top:647px;font-size:12px;color:#000;letter-spacing:0.3px;line-height:14px;font-family:'Liberation Sans';">X509v3 Authority Key Identifier</div>
<div class="t" style="left:1080px;top:647px;font-size:12px;color:#000;letter-spacing:0.35px;line-height:14px;font-family:'Liberation Sans';">keyid:56:D3:CB:09:F4:7F:CB:08:24:D2:1A:3C</div>
<div class="t" style="left:879px;top:663px;font-size:12px;color:#000;letter-spacing:0.3px;line-height:14px;font-family:'Liberation Sans';">X509v3 Authority Key Identifier</div>
<div class="t" style="left:1080px;top:663px;font-size:12px;color:#000;letter-spacing:0.35px;line-height:14px;font-family:'Liberation Sans';">DirName:/C=DE/ST=BY/L=Nbg/CN=NeueCA</div>
<div class="t" style="left:879px;top:679px;font-size:12px;color:#000;letter-spacing:0.3px;line-height:14px;font-family:'Liberation Sans';">X509v3 Authority Key Identifier</div>
<div class="t" style="left:1080px;top:679px;font-size:12px;color:#000;letter-spacing:0.35px;line-height:14px;font-family:'Liberation Sans';">serial:00</div>
<div class="t" style="left:879px;top:695px;font-size:12px;color:#000;letter-spacing:0.3px;line-height:14px;font-family:'Liberation Sans';">X509v3 Basic Constraints</div>
<div class="t" style="left:1080px;top:695px;font-size:12px;color:#000;letter-spacing:0.35px;line-height:14px;font-family:'Liberation Sans';">CA:FALSE</div>
<div class="t" style="left:879px;top:711px;font-size:12px;color:#000;letter-spacing:0.3px;line-height:14px;font-family:'Liberation Sans';">X509v3 Issuer Alternative Name</div>
<div class="t" style="left:1080px;top:711px;font-size:12px;color:#000;letter-spacing:0.35px;line-height:14px;font-family:'Liberation Sans';">&lt;EMPTY&gt;</div>
<div class="t" style="left:879px;top:727px;font-size:12px;color:#000;letter-spacing:0.3px;line-height:14px;font-family:'Liberation Sans';">X509v3 Subject Key Identifier</div>
<div class="t" style="left:1080px;top:727px;font-size:12px;color:#000;letter-spacing:0.35px;line-height:14px;font-family:'Liberation Sans';">0A:D6:3A:EC:27:41:2F:E0:D4:4B:85:1C</div>
<svg style="position:absolute;left:843px;top:746px" width="12" height="8"><path d="M0.5 0.5 H11 L5.75 6.8 Z" fill="#fff" stroke="#000" stroke-width="1"/></svg>
<div class="t" style="left:859px;top:743px;font-size:12px;color:#000;letter-spacing:0.3px;line-height:14px;font-family:'Liberation Sans';">Netscape Extensions:</div>
<div class="t" style="left:879px;top:759px;font-size:12px;color:#000;letter-spacing:0.3px;line-height:14px;font-family:'Liberation Sans';">Netscape Cert Type</div>
<div class="t" style="left:1080px;top:759px;font-size:12px;color:#000;letter-spacing:0.35px;line-height:14px;font-family:'Liberation Sans';">SSL Client</div>
<div class="t" style="left:879px;top:775px;font-size:12px;color:#000;letter-spacing:0.3px;line-height:14px;font-family:'Liberation Sans';">Netscape Cert Type</div>
<div class="t" style="left:1080px;top:775px;font-size:12px;color:#000;letter-spacing:0.35px;line-height:14px;font-family:'Liberation Sans';">S/MIME</div>
<div class="t" style="left:879px;top:791px;font-size:12px;color:#000;letter-spacing:0.3px;line-height:14px;font-family:'Liberation Sans';">Netscape Cert Type</div>
<div class="t" style="left:1080px;top:791px;font-size:12px;color:#000;letter-spacing:0.35px;line-height:14px;font-family:'Liberation Sans';">Object Signing</div>
<div class="t" style="left:879px;top:807px;font-size:12px;color:#000;letter-spacing:0.3px;line-height:14px;font-family:'Liberation Sans';">Netscape Comment</div>
<div class="t" style="left:1080px;top:807px;font-size:12px;color:#000;letter-spacing:0.35px;line-height:14px;font-family:'Liberation Sans';">TinyCA Generated Certificate</div>
</div></body></html>
